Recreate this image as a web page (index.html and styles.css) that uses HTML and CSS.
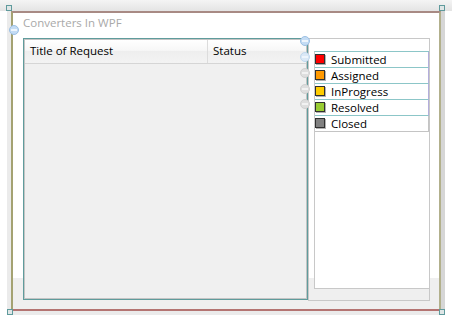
FILE: index.html
```html
<!DOCTYPE html>
<html lang="en">
<head>
    <meta charset="UTF-8">
    <title>Converters In WPF</title>
    <link rel="stylesheet" href="styles.css">
</head>
<body>
    <div class="surface">
        <div class="window">
            <div class="title">Converters In WPF</div>
            <div class="content">
                <div class="grid">
                    <div class="grid-header">
                        <div class="col col-title">Title of Request</div>
                        <div class="col col-status">Status</div>
                    </div>
                </div>
                <div class="side">
                    <div class="legend">
                        <div class="legend-row"><span class="swatch submitted"></span>Submitted</div>
                        <div class="legend-row"><span class="swatch assigned"></span>Assigned</div>
                        <div class="legend-row"><span class="swatch inprogress"></span>InProgress</div>
                        <div class="legend-row"><span class="swatch resolved"></span>Resolved</div>
                        <div class="legend-row last"><span class="swatch closed"></span>Closed</div>
                    </div>
                </div>
            </div>
        </div>

        <!-- designer adorners -->
        <span class="handle h-tl"></span>
        <span class="handle h-tr"></span>
        <span class="handle h-bl"></span>
        <span class="handle h-br"></span>
        <span class="knob k-move"></span>
        <span class="knob k1"></span>
        <span class="knob k2 light"></span>
        <span class="knob k3 grey"></span>
        <span class="knob k4 grey"></span>
        <span class="knob k5 grey"></span>
    </div>
</body>
</html>
```

FILE: styles.css
```css
body {
    margin: 0;
    background: #fff;
    font-family: 'Open Sans', 'Noto Sans', Arial, sans-serif;
}
.surface {
    position: relative;
    width: 452px;
    height: 322px;
    padding: 11px 0 0 11px;
    box-sizing: border-box;
    background: linear-gradient(#f4f4f4, #e4e4e4) 0 0 / 100% 11px no-repeat;
}
.window {
    width: 430px;
    height: 300px;
    box-sizing: border-box;
    border-top: 2px solid #a88a84;
    border-left: 2px solid #a4a272;
    border-right: 2px solid #b2b08c;
    border-bottom: 2px solid #b47472;
    background: linear-gradient(to bottom, #fff 265px, #efefef 265px);
    box-shadow: -4px 0 0 #ebebeb, 4px 0 0 #d6d6d6, 0 4px 0 #ebebeb;
    display: flex;
    flex-direction: column;
}
.title {
    height: 25px;
    padding-left: 10px;
    font-size: 11.5px;
    line-height: 15px;
    padding-top: 2px;
    box-sizing: border-box;
    color: #a9a9a9;
}
.content {
    display: flex;
    padding-left: 10px;
}
.grid {
    width: 285px;
    height: 262px;
    box-sizing: border-box;
    border: 1px solid #5f9c9c;
    box-shadow: inset 0 0 0 1px #c4c4c4;
    background: #f0f0f0;
}
.grid-header {
    display: flex;
    height: 24px;
    margin: 1px 1px 0;
    box-sizing: border-box;
    border-bottom: 1px solid #d5d5d5;
    background: linear-gradient(#ffffff, #f7f7f7 45%, #eeeeee 50%, #f3f3f3);
}
.col {
    font-size: 11.5px;
    line-height: 22px;
    color: #000;
    padding-left: 5px;
    box-sizing: border-box;
}
.col-title {
    width: 183px;
    border-right: 1px solid #dcdcdc;
}
.col-status {
    flex: 1;
}
.side {
    width: 122px;
    height: 263px;
    box-sizing: border-box;
    border: 1px solid #c8c8c8;
    padding: 12px 0 11px 5px;
}
.legend {
    height: 100%;
    box-sizing: border-box;
    border: 1px solid #c8c8c8;
    border-right: 0;
    border-top-color: #8cc6c8;
    background: #fff;
}
.legend-row {
    display: flex;
    align-items: center;
    height: 16px;
    padding-bottom: 1px;
    box-sizing: border-box;
    border-bottom: 1px solid #8cc6c8;
    border-right: 1px solid #b4aedc;
    font-size: 11.5px;
    color: #000;
}
.legend-row.last {
    border-bottom-color: #c4c4c4;
    border-right-color: #c4c4c4;
}
.swatch {
    width: 10px;
    height: 10px;
    box-sizing: border-box;
    border: 1px solid #303030;
    box-shadow: 1px 1px 0 #b0b0b0;
    margin: 0 6px 0 0;
}
.submitted { background: #ff0000; }
.assigned { background: #ff9900; }
.inprogress { background: #ffcc00; }
.resolved { background: #99cc33; }
.closed { background: #808080; }

.handle {
    position: absolute;
    width: 6px;
    height: 6px;
    border: 1px solid #5f9a9c;
    background: #dfe6e6;
    box-sizing: border-box;
}
.h-tl { left: 6px; top: 5px; }
.h-tr { left: 439px; top: 5px; }
.h-bl { left: 7px; top: 309px; }
.h-br { left: 439px; top: 309px; }

.knob {
    position: absolute;
    width: 10px;
    height: 10px;
    border-radius: 50%;
    border: 1px solid #9cc0e4;
    background: #c4dcf4;
    box-sizing: border-box;
}
.knob::after {
    content: '';
    position: absolute;
    left: 1px;
    right: 1px;
    top: 3px;
    height: 2px;
    background: #eef5fc;
}
.knob.light {
    border-color: #c0d8ee;
    background: #dae8f6;
}
.knob.grey {
    border-color: #d0d0d0;
    background: #dedede;
}
.knob.grey::after {
    background: #f2f2f2;
}
.k-move { left: 9px; top: 25px; }
.k1 { left: 300px; top: 36px; }
.k2 { left: 300px; top: 52px; }
.k3 { left: 300px; top: 68px; }
.k4 { left: 300px; top: 84px; }
.k5 { left: 300px; top: 99px; }
```
